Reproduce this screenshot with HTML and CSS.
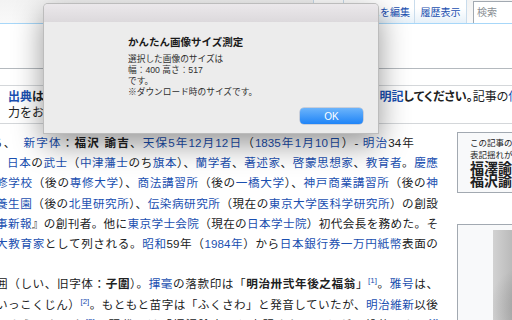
FILE: index.html
```html
<!DOCTYPE html>
<html lang="ja">

<head>
    <meta charset="utf-8">
    <title>福澤諭吉 - Wikipedia</title>
    <link rel="stylesheet" href="styles.css">
</head>

<body>
    <div id="head">
        <div class="fill"></div>
        <a class="tab tab-read" href="#"></a>
        <a class="tab tab-edit" href="#">ソースを編集</a>
        <a class="tab tab-hist" href="#">履歴表示</a>
        <div class="search">検索</div>
    </div>

    <div id="first-heading"></div>

    <div class="ambox">
        <div class="ambox-line"><b><a href="#">出典</a>は列挙するだけでなく<a href="#">脚注</a>を用いてどの記述の情報源であるかを<span class="ambox-tail"><a href="#">明記</a>してください。</span></b><span class="ambox-tail">記事の<a href="#">信頼性</a>向上にご協</span></div>
        <div class="ambox-line">力をお願いいたします。（2018年1月）</div>
    </div>

    <div id="content">
        <div class="main">
            <div class="ln ln-first">ち、　<a href="#">新字体</a>：<b>福沢 諭吉</b>、<a href="#">天保5年</a><a href="#">12月12日</a>（<a href="#">1835年</a><a href="#">1月10日</a>）- <a href="#">明治</a>34年</div>
            <div class="ln ln-indent"><a href="#">日本</a>の<a href="#">武士</a>（<a href="#">中津藩士</a>のち<a href="#">旗本</a>）、<a href="#">蘭学者</a>、<a href="#">著述家</a>、<a href="#">啓蒙思想家</a>、<a href="#">教育者</a>。<a href="#">慶應</a></div>
            <div class="ln"><a href="#">修学校</a>（後の<a href="#">専修大学</a>）、<a href="#">商法講習所</a>（後の<a href="#">一橋大学</a>）、<a href="#">神戸商業講習所</a>（後の<a href="#">神</a></div>
            <div class="ln"><a href="#">養生園</a>（後の<a href="#">北里研究所</a>）、<a href="#">伝染病研究所</a>（現在の<a href="#">東京大学医科学研究所</a>）の創設</div>
            <div class="ln"><a href="#">事新報</a>』の創刊者。他に<a href="#">東京学士会院</a>（現在の<a href="#">日本学士院</a>）初代会長を務めた。そ</div>
            <div class="ln"><a href="#">大教育家</a>として列される。<a href="#">昭和</a>59年（<a href="#">1984年</a>）から<a href="#">日本銀行券一万円紙幣</a>表面の</div>
            <div class="gap"></div>
            <div class="ln">囲（しい、旧字体：<b>子圍</b>）。<a href="#">揮毫</a>の落款印は「<b>明治卅弐年後之福翁</b>」<sup><a href="#">[1]</a></sup>。<a href="#">雅号</a>は、</div>
            <div class="ln">いっこくじん）<sup><a href="#">[2]</a></sup>。もともと苗字は「ふくさわ」と発音していたが、<a href="#">明治維新</a>以後</div>
            <div class="ln">るようになった<sup><a href="#">[3]</a></sup>。現代では「福沢諭吉」と表記されることが一般的である<sup><a href="#">[4]</a></sup></div>
        </div>

        <div class="aside">
            <div class="variants">
                <div class="variants-note">この記事の項目名には</div>
                <div class="variants-note">表記揺れがあります。</div>
                <div class="variants-name">福澤諭吉</div>
                <div class="variants-name">福沢諭吉</div>
            </div>
            <div class="infobox">
                <div class="portrait"></div>
            </div>
        </div>
    </div>

    <!-- 拡張機能のアラート -->
    <div id="alert">
        <div class="alert-bar"></div>
        <div class="alert-body">
            <div class="alert-title">かんたん画像サイズ測定</div>
            <div class="alert-text">
                <div>選択した画像のサイズは</div>
                <div>幅：400 高さ：517</div>
                <div>です。</div>
                <div>※ダウンロード時のサイズです。</div>
            </div>
            <button class="alert-ok">OK</button>
        </div>
    </div>
</body>

</html>
```

FILE: styles.css
```css
body {
    margin: 0;
    width: 512px;
    height: 320px;
    overflow: hidden;
    position: relative;
    background: #ffffff;
    color: #202122;
    font-family: "Liberation Sans", "Noto Sans CJK JP", sans-serif;
}

a {
    color: #1a4fb0;
    text-decoration: none;
}

/* 上部のタブ */
#head {
    display: flex;
    height: 23px;
    border-bottom: 1px solid #a7d7f9;
    background: linear-gradient(#f3f3f3, #f9f9f9);
}

#head .fill {
    flex: none;
    width: 313px;
}

.tab {
    flex: none;
    box-sizing: border-box;
    display: flex;
    align-items: center;
    justify-content: flex-end;
    padding-right: 4px;
    border-left: 1px solid #c9dcec;
    background: linear-gradient(#ffffff 35%, #e7f1f9);
    font-size: 10px;
    white-space: nowrap;
    overflow: hidden;
}

.tab-read {
    width: 30px;
}

.tab-edit {
    width: 71px;
}

.tab-hist {
    width: 53px;
    padding-right: 0;
    justify-content: center;
    border-right: 1px solid #c9dcec;
}

.search {
    flex: none;
    width: 60px;
    height: 21px;
    margin: 1px 0 0 6px;
    padding-left: 3px;
    border: 1px solid #a2a9b1;
    border-bottom: none;
    background: #ffffff;
    color: #8a8f94;
    font-size: 10px;
    line-height: 21px;
}

/* 記事タイトルの下線 */
#first-heading {
    height: 44px;
    border-bottom: 1px solid #b4b9be;
}

/* 出典テンプレート */
.ambox {
    margin-top: 16px;
    padding: 3px 0 2px 8px;
    border-top: 1px solid #d4d7da;
    border-bottom: 1px solid #d4d7da;
    font-size: 12px;
    line-height: 16px;
}

.ambox-line {
    white-space: nowrap;
}

/* かなを詰めて組む部分 */
.ambox-tail {
    font-feature-settings: "palt";
}

/* 本文 */
#content {
    display: flex;
    margin-top: 8px;
}

.main {
    flex: none;
    width: 457px;
    padding-top: 1px;
    font-size: 11.6px;
    line-height: 20.2px;
}

.ln {
    width: 442px;
    margin-left: -4px;
    white-space: nowrap;
    text-align: justify;
    text-align-last: justify;
}

.ln-first {
    width: 423px;
    margin-left: -9px;
}

.ln-indent {
    text-indent: 11px;
}

.gap {
    height: 20.2px;
}

sup {
    font-size: 8px;
    line-height: 0;
    vertical-align: 5px;
}

/* 右側の囲み */
.aside {
    flex: none;
    width: 80px;
}

.variants {
    box-sizing: border-box;
    height: 61px;
    padding: 4px 0 0 12px;
    border: 1px solid #a2a9b1;
    background: #f8f9fa;
    white-space: nowrap;
    overflow: hidden;
}

.variants-note {
    font-size: 8.5px;
    line-height: 12px;
}

.variants-name {
    font-size: 14px;
    font-weight: bold;
    line-height: 13px;
}

.variants-note + .variants-name {
    margin-top: 0.5px;
}

.infobox {
    height: 120px;
    margin-top: 31px;
    padding: 5px 0 0 35px;
    border: 1px solid #a2a9b1;
    background: #f8f9fa;
}

.portrait {
    width: 100px;
    height: 120px;
    background:
        radial-gradient(circle at 40% 65%, rgba(70, 70, 70, 0.3), transparent 45%),
        linear-gradient(90deg, #d2d2d2, #a6a6a6 35%, #8e8e8e);
}

/* アラートダイアログ */
#alert {
    position: absolute;
    left: 43px;
    top: 3px;
    box-sizing: border-box;
    width: 336px;
    height: 131px;
    display: flex;
    flex-direction: column;
    background: #ececec;
    border: 1px solid rgba(0, 0, 0, 0.2);
    border-radius: 5px 5px 0 0;
    box-shadow: 0 10px 30px rgba(0, 0, 0, 0.42);
}

.alert-bar {
    height: 18px;
    border-radius: 4px 4px 0 0;
    background: linear-gradient(#ebe8eb, #dcd9dc);
}

.alert-body {
    flex: 1;
    display: flex;
    flex-direction: column;
    padding: 14px 15px 9px 84px;
}

.alert-title {
    font-size: 10.5px;
    font-weight: bold;
    line-height: 13px;
    color: #1a1a1a;
}

.alert-text {
    margin-top: 4.5px;
    font-size: 8.7px;
    line-height: 11.2px;
    color: #2f2f2f;
}

.alert-ok {
    align-self: flex-end;
    margin-top: auto;
    width: 63px;
    height: 16px;
    padding: 0;
    border: none;
    border-radius: 4px;
    background: linear-gradient(#6cb4fb, #1f84f7);
    box-shadow: 0 0 0 0.5px rgba(0, 40, 120, 0.3);
    color: #ffffff;
    font-family: "Liberation Sans", sans-serif;
    font-size: 10px;
}
```
